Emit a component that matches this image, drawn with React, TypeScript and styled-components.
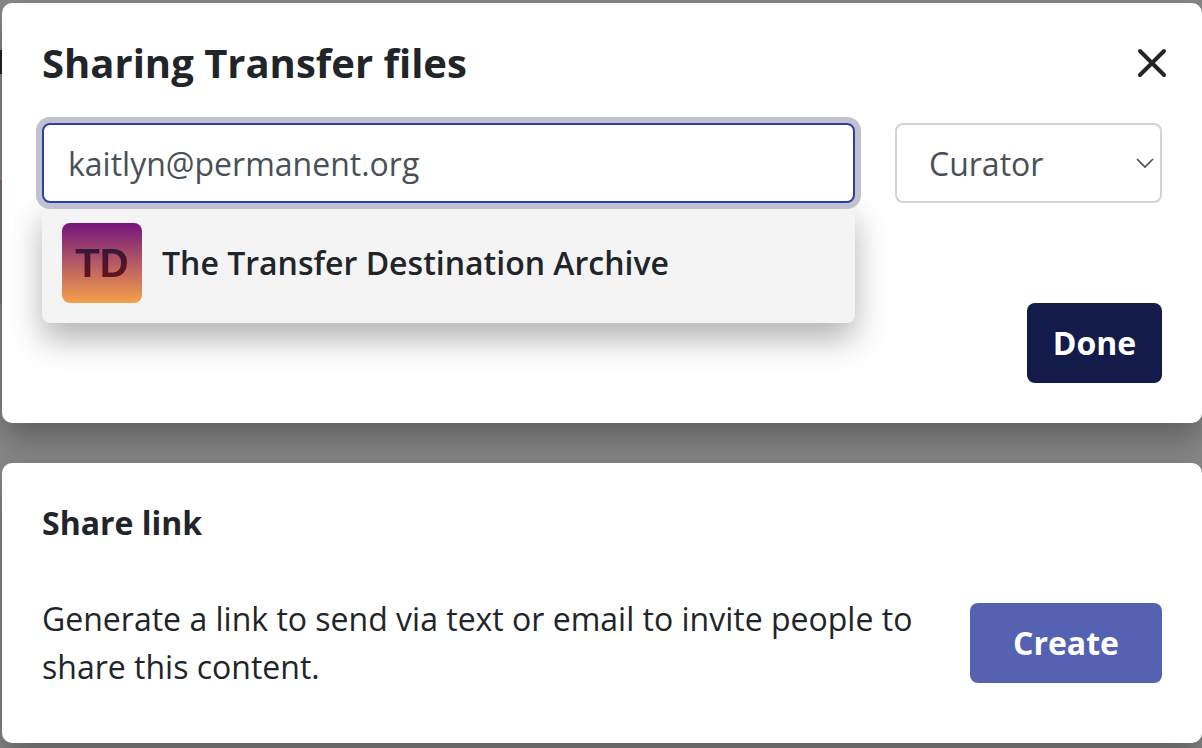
import { useState } from 'react';
import styled, { createGlobalStyle } from 'styled-components';

const GlobalStyle = createGlobalStyle`
  *, *::before, *::after { box-sizing: border-box; }
  body {
    margin: 0;
    min-height: 100vh;
    background:
      linear-gradient(#222 0 0) 0 50px / 2px 24px no-repeat,
      linear-gradient(#7d706a 0 0) 0 180px / 2px 124px no-repeat,
      #888;
    color: #212529;
    font: 400 32px/48px "Open Sans", "Noto Sans", sans-serif;
  }
  h1, h2, p, ul { margin: 0; padding: 0; }
  button, input, select { font: inherit; }
`;

const Page = styled.main`
  display: flex;
  flex-direction: column;
  gap: 40px;
  padding: 3px 0 5px 2px;
`;

const Card = styled.section`
  background: #fff;
  border-radius: 10px;
  box-shadow: 0 16px 32px rgba(0, 0, 0, 0.3);
`;

const ShareCard = styled(Card)`
  padding: 40px;
`;

const LinkCard = styled(Card)`
  position: relative;
  padding: 36px 40px 52px;
`;

const Header = styled.header`
  display: flex;
  align-items: center;
  justify-content: space-between;
  height: 40px;
  margin-bottom: 40px;
`;

const Title = styled.h1`
  font-size: 40px;
  font-weight: 700;
`;

const Subtitle = styled.h2`
  margin-bottom: 48px;
  font-size: 32px;
  font-weight: 700;
`;

const CloseButton = styled.button`
  display: flex;
  align-items: center;
  justify-content: center;
  width: 40px;
  height: 40px;
  margin-right: -10px;
  padding: 0;
  border: 0;
  background: none;
  color: #212529;
  cursor: pointer;
`;

const Fields = styled.div`
  display: flex;
  gap: 40px;
  margin-bottom: 100px;
`;

const Combo = styled.div`
  position: relative;
  flex: 1;
  min-width: 0;
`;

const EmailInput = styled.input`
  position: relative;
  z-index: 2;
  display: block;
  width: 100%;
  height: 80px;
  padding: 0 24px;
  border: 2px solid #2f3fa6;
  border-radius: 8px;
  outline: 0;
  background: #fff;
  box-shadow: 0 0 0 6px #c0c2d0;
  color: #495057;
`;

const Suggestions = styled.ul`
  position: absolute;
  z-index: 1;
  top: 100%;
  left: 0;
  right: 0;
  list-style: none;
  border-radius: 0 0 8px 8px;
  background: #f4f4f4;
  box-shadow: 0 16px 32px rgba(0, 0, 0, 0.3);
`;

const Suggestion = styled.button`
  display: flex;
  align-items: center;
  gap: 20px;
  width: 100%;
  padding: 20px;
  border: 0;
  background: none;
  color: #212529;
  font-weight: 600;
  text-align: left;
  cursor: pointer;
`;

const Avatar = styled.span`
  display: flex;
  align-items: center;
  justify-content: center;
  width: 80px;
  height: 80px;
  border-radius: 8px;
  background: linear-gradient(#74147c, #f5a04b);
`;

const Initials = styled.span`
  background: linear-gradient(#35173d 20%, #651219 80%);
  background-clip: text;
  color: transparent;
  font-family: "Liberation Sans", Arial, sans-serif;
  font-size: 40px;
  font-weight: 700;
`;

const RoleField = styled.div`
  position: relative;
  flex: 0 0 267px;
`;

const RoleSelect = styled.select`
  display: block;
  width: 100%;
  height: 80px;
  padding: 2px 32px 0;
  appearance: none;
  border: 2px solid #ced4da;
  border-radius: 8px;
  background: #fff;
  color: #495057;
`;

const Chevron = styled.svg`
  position: absolute;
  top: 34px;
  right: 8px;
  pointer-events: none;
`;

const Actions = styled.div`
  display: flex;
  justify-content: flex-end;
`;

const Button = styled.button<{ $tone: 'dark' | 'light' }>`
  flex: none;
  min-width: ${({ $tone }) => ($tone === 'dark' ? 135 : 192)}px;
  height: 80px;
  padding: 0 24px;
  border: 0;
  border-radius: 8px;
  background: ${({ $tone }) => ($tone === 'dark' ? '#131b4a' : '#5561b1')};
  color: #fff;
  font-weight: 700;
  cursor: pointer;
`;

const LinkRow = styled.div`
  display: flex;
  align-items: center;
  justify-content: space-between;
  gap: 40px;
`;

export default function App() {
  const [email, setEmail] = useState('kaitlyn@permanent.org');
  return (
    <>
      <GlobalStyle />
      <Page>
        <ShareCard>
          <Header>
            <Title>Sharing Transfer files</Title>
            <CloseButton type="button" aria-label="Close">
              <svg width="30" height="30" viewBox="0 0 30 30" fill="none" stroke="currentColor" strokeWidth="4" strokeLinecap="round">
                <path d="M3 3L27 27M27 3L3 27" />
              </svg>
            </CloseButton>
          </Header>
          <Fields>
            <Combo>
              <EmailInput
                type="email"
                aria-label="Email address"
                spellCheck={false}
                value={email}
                onChange={(e) => setEmail(e.target.value)}
              />
              <Suggestions>
                <li>
                  <Suggestion type="button">
                    <Avatar aria-hidden="true">
                      <Initials>TD</Initials>
                    </Avatar>
                    The Transfer Destination Archive
                  </Suggestion>
                </li>
              </Suggestions>
            </Combo>
            <RoleField>
              <RoleSelect aria-label="Access role" defaultValue="Curator">
                <option>Curator</option>
              </RoleSelect>
              <Chevron width="18" height="12" viewBox="0 0 18 12" fill="none" stroke="#495057" strokeWidth="1.7">
                <path d="M1 2L9 10L17 2" />
              </Chevron>
            </RoleField>
          </Fields>
          <Actions>
            <Button type="button" $tone="dark">Done</Button>
          </Actions>
        </ShareCard>
        <LinkCard>
          <Subtitle>Share link</Subtitle>
          <LinkRow>
            <p>Generate a link to send via text or email to invite people to share this content.</p>
            <Button type="button" $tone="light">Create</Button>
          </LinkRow>
        </LinkCard>
      </Page>
    </>
  );
}
